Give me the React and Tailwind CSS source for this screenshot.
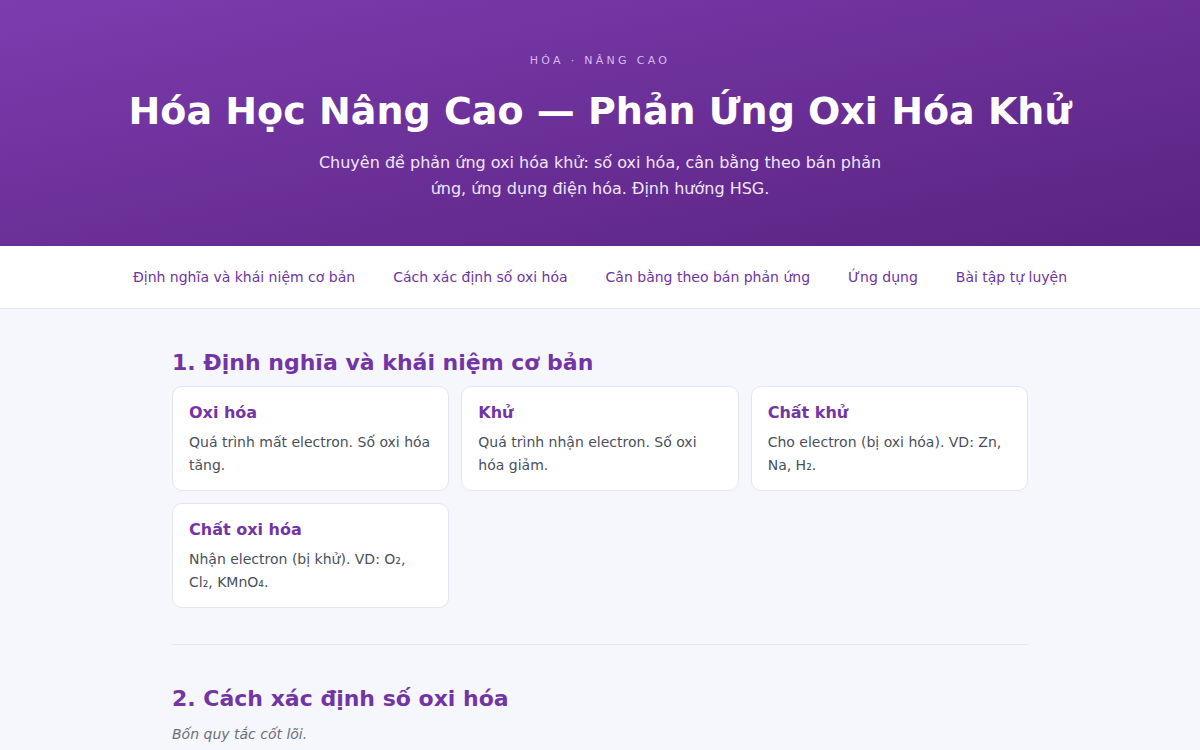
import React from "react";

const NAV = [
  "Định nghĩa và khái niệm cơ bản",
  "Cách xác định số oxi hóa",
  "Cân bằng theo bán phản ứng",
  "Ứng dụng",
  "Bài tập tự luyện",
];

const CONCEPTS = [
  { title: "Oxi hóa", text: "Quá trình mất electron. Số oxi hóa tăng." },
  { title: "Khử", text: "Quá trình nhận electron. Số oxi hóa giảm." },
  { title: "Chất khử", text: "Cho electron (bị oxi hóa). VD: Zn, Na, H₂." },
  { title: "Chất oxi hóa", text: "Nhận electron (bị khử). VD: O₂, Cl₂, KMnO₄." },
];

export default function App() {
  return (
    <div
      className="min-h-screen bg-[#f5f7fc]"
      style={{ fontFamily: '"DejaVu Sans", "Noto Sans", sans-serif' }}
    >
      {/* Hero */}
      <header className="bg-gradient-to-br from-[#7d3cae] to-[#5a2382] text-white text-center pt-[53px] pb-[44px] px-6">
        <p className="text-[11px] uppercase tracking-[0.3em] text-[#d7b9ee] leading-4">
          Hóa · Nâng cao
        </p>
        <h1 className="mt-[18px] text-[38px] font-bold leading-[48px]">
          Hóa Học Nâng Cao — Phản Ứng Oxi Hóa Khử
        </h1>
        <p className="mt-[15px] mx-auto max-w-[600px] text-[16px] leading-[26px] text-[#efe6f7]">
          Chuyên đề phản ứng oxi hóa khử: số oxi hóa, cân bằng theo bán phản
          ứng, ứng dụng điện hóa. Định hướng HSG.
        </p>
      </header>

      {/* Nav */}
      <nav className="bg-white border-b border-[#e3e6f0] h-[63px] flex items-center justify-center gap-[38px]">
        {NAV.map((n) => (
          <a key={n} href="#" className="text-[14px] text-[#6f33a3]">
            {n}
          </a>
        ))}
      </nav>

      <main className="max-w-[856px] mx-auto">
        <section className="pt-[38px] pb-[36px] border-b border-[#e3e6f0]">
          <h2 className="text-[22px] font-bold text-[#7334a6] leading-8 mb-[7px]">
            1. Định nghĩa và khái niệm cơ bản
          </h2>
          <div className="grid grid-cols-3 gap-x-[12px] gap-y-[12px]">
            {CONCEPTS.map((c) => (
              <div
                key={c.title}
                className="bg-white border border-[#e3e6f0] rounded-[10px] px-4 pt-[14px] pb-[13px]"
              >
                <h3 className="text-[16px] font-bold text-[#7334a6] leading-6">
                  {c.title}
                </h3>
                <p className="mt-[6px] text-[14px] leading-[23px] text-[#4a4f5c]">
                  {c.text}
                </p>
              </div>
            ))}
          </div>
        </section>

        <section className="pt-[38px]">
          <h2 className="text-[22px] font-bold text-[#7334a6] leading-8">
            2. Cách xác định số oxi hóa
          </h2>
          <p className="mt-[9px] text-[14px] italic text-[#6b7080]">
            Bốn quy tắc cốt lõi.
          </p>
        </section>
      </main>
    </div>
  );
}
